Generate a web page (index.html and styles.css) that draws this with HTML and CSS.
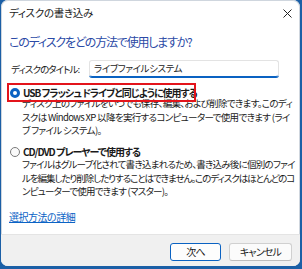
FILE: index.html
```html
<!DOCTYPE html>
<html lang="ja">
<head>
<meta charset="utf-8">
<link rel="stylesheet" href="styles.css">
</head>
<body>
<div class="window">
  <div class="titlebar">
    <span class="title">ディスクの書き込み</span>
    <svg class="close" width="9" height="9" viewBox="0 0 9 9"><path d="M0.5 0.5 L8.5 8.5 M8.5 0.5 L0.5 8.5" stroke="#222" stroke-width="1"/></svg>
  </div>
  <div class="content">
    <div class="heading">このディスクをどの方法で使用しますか?</div>
    <div class="title-row">
      <span class="label">ディスクのタイトル:</span>
      <div class="input">ライブファイルシステム</div>
    </div>
    <div class="option">
      <span class="radio checked"></span>
      <span class="opt-label">USB フラッシュ ドライブと同じように使用する</span>
      <span class="highlight"></span>
    </div>
    <div class="desc desc1">ディスク上のファイルをいつでも保存、編集、および削除できます。このディ<br>スクは Windows XP 以降を実行するコンピューターで使用できます (ライ<br>ブ ファイル システム)。</div>
    <div class="option option2">
      <span class="radio"></span>
      <span class="opt-label">CD/DVD プレーヤーで使用する</span>
    </div>
    <div class="desc desc2">ファイルはグループ化されて書き込まれるため、書き込み後に個別のファイ<br><span class="tight">ルを編集したり削除したりすることはできません。このディスクはほとんどのコ</span><br>ンピューターで使用できます (マスター)。</div>
    <a class="link" href="#">選択方法の詳細</a>
  </div>
  <div class="footer">
    <button class="btn primary">次へ</button>
    <button class="btn">キャンセル</button>
  </div>
</div>
</body>
</html>
```
FILE: styles.css
```css
html, body {
  margin: 0;
  padding: 0;
}
body {
  width: 302px;
  height: 269px;
  overflow: hidden;
  background: #1b5fa6;
  font-family: "Noto Sans CJK JP", "Noto Sans", sans-serif;
  font-feature-settings: "palt";
  color: #1a1a1a;
}
.window {
  margin-left: 1px;
  width: 299px;
  height: 266px;
  background: #ffffff;
  border-radius: 7px;
  display: flex;
  flex-direction: column;
  overflow: hidden;
  box-shadow: inset 0 0 0 1px #cfd6de;
}
.titlebar {
  height: 26px;
  display: flex;
  align-items: center;
  justify-content: space-between;
  padding: 0 7px 0 8px;
  font-size: 10.5px;
  letter-spacing: -0.3px;
}
.title {
  line-height: 14px;
}
.close {
  margin-right: 1px;
}
.content {
  flex: 1;
  padding: 0 8px;
  display: flex;
  flex-direction: column;
  align-items: flex-start;
  white-space: nowrap;
}
.heading {
  margin-top: 6px;
  font-size: 12px;
  letter-spacing: -1.2px;
  line-height: 20px;
  color: #2b4aa6;
}
.title-row {
  margin-top: 8px;
  display: flex;
  align-items: center;
  font-size: 9.5px;
  letter-spacing: -0.9px;
}
.label {
  width: 78px;
  padding-left: 2px;
}
.input {
  box-sizing: border-box;
  width: 190px;
  height: 17px;
  line-height: 15px;
  padding-left: 4px;
  border: 1px solid #e3e3e3;
  border-bottom: 1px solid #0a62c2;
  box-shadow: 0 1px 0 #0a62c2;
  border-radius: 3px;
  font-size: 9.5px;
  letter-spacing: -0.4px;
}
.option {
  position: relative;
  margin-top: 10px;
  height: 12px;
  display: flex;
  align-items: center;
  gap: 3px;
  padding-left: 1px;
}
.option2 {
  margin-top: 9px;
}
.radio {
  box-sizing: border-box;
  width: 10px;
  height: 10px;
  border-radius: 50%;
  border: 1px solid #7a7a7a;
  background: #fafafa;
}
.radio.checked {
  border: 3px solid #0a62c2;
  background: #ffffff;
}
.opt-label {
  font-size: 10px;
  font-weight: bold;
  letter-spacing: -1px;
  line-height: 12px;
}
.highlight {
  position: absolute;
  left: -2px;
  top: -4px;
  width: 189px;
  height: 19px;
  border: 2.5px solid #e3141b;
  box-sizing: border-box;
  pointer-events: none;
}
.desc {
  margin-top: 0;
  padding-left: 13px;
  font-size: 9.5px;
  letter-spacing: -0.65px;
  line-height: 13.3px;
  color: #1a1a1a;
}
.desc1 {
  margin-top: -1.6px;
}
.desc2 {
  letter-spacing: -0.75px;
}
.desc2 .tight {
  letter-spacing: -1.05px;
}
.link {
  margin-top: 12px;
  font-size: 10px;
  letter-spacing: -0.5px;
  line-height: 14px;
  color: #0b63c5;
  text-decoration: underline;
}
.footer {
  height: 32px;
  box-sizing: border-box;
  background: #f0f0f0;
  border-top: 1px solid #e4e4e4;
  display: flex;
  justify-content: flex-end;
  align-items: flex-start;
  gap: 8px;
  padding: 8px 8px 0 0;
}
.btn {
  height: 18px;
  padding: 0;
  font-family: inherit;
  font-feature-settings: "palt";
  font-size: 10px;
  letter-spacing: -0.8px;
  line-height: 14px;
  border: 1px solid #d0d0d0;
  border-bottom-color: #bdbdbd;
  border-radius: 3px;
  background: #fbfbfb;
  color: #1a1a1a;
}
.btn.primary {
  width: 51px;
  border: 1px solid #0a62c2;
  background: #fdfdfd;
}
.btn:not(.primary) {
  width: 63px;
}
```
